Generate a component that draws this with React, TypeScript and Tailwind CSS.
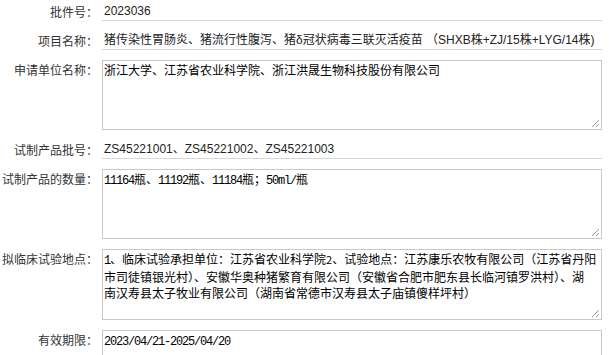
import React from "react";

const sans = "font-['Liberation_Sans','Noto_Sans_CJK_SC',sans-serif]";
const cjk = "font-['Noto_Sans_CJK_SC',sans-serif]";

function L({ children }: { children: React.ReactNode }) {
  return <span className="font-['Liberation_Mono',monospace] tracking-[-1.2px]">{children}</span>;
}

function Grip() {
  return (
    <svg className="absolute right-[1px] bottom-[1px]" width="10" height="10" viewBox="0 0 10 10">
      <line x1="9" y1="2" x2="2" y2="9" stroke="#9a9a9a" strokeWidth="1" />
      <line x1="9" y1="6" x2="6" y2="9" stroke="#9a9a9a" strokeWidth="1" />
    </svg>
  );
}

function Label({ text, top }: { text: string; top?: boolean }) {
  return (
    <div
      className={`w-[98px] shrink-0 text-right text-[12px] text-[#333] whitespace-nowrap ${cjk} ${
        top ? "pt-[2px] leading-[16px]" : "leading-[19px]"
      }`}
    >
      {text}
    </div>
  );
}

function InputRow({ label, value }: { label: string; value: React.ReactNode }) {
  return (
    <div className="flex">
      <Label text={label} />
      <div
        className={`ml-[4px] w-[500px] h-[19px] border-b border-[#d6d6d6] pl-[2px] text-[12px] leading-[18px] text-[#222] whitespace-nowrap ${sans}`}
      >
        {value}
      </div>
    </div>
  );
}

function AreaRow({ label, lines, h = "h-[70px]" }: { label: string; lines: React.ReactNode[]; h?: string }) {
  return (
    <div className="flex">
      <Label text={label} top />
      <div
        className={`relative ml-[4px] w-[500px] ${h} border border-[#c8c8c8] bg-white px-[1px] pt-[1px] text-[12px] leading-[16px] text-black ${cjk}`}
      >
        {lines.map((l, i) => (
          <div key={i} className="whitespace-nowrap">
            {l}
          </div>
        ))}
        <Grip />
      </div>
    </div>
  );
}

export default function App() {
  return (
    <div className="w-[611px] h-[355px] overflow-hidden bg-white pt-[2px]">
      <div className="flex flex-col gap-[10px]">
        <InputRow label="批件号：" value="2023036" />
        <InputRow
          label="项目名称："
          value="猪传染性胃肠炎、猪流行性腹泻、猪δ冠状病毒三联灭活疫苗 （SHXB株+ZJ/15株+LYG/14株)"
        />
        <AreaRow label="申请单位名称：" lines={["浙江大学、江苏省农业科学院、浙江洪晟生物科技股份有限公司"]} />
        <InputRow label="试制产品批号：" value="ZS45221001、ZS45221002、ZS45221003" />
        <AreaRow
          label="试制产品的数量："
          lines={[
            <>
              <L>11164</L>瓶、<L>11192</L>瓶、<L>11184</L>瓶；<L>50ml/</L>瓶
            </>,
          ]}
        />
        <AreaRow
          label="拟临床试验地点："
          h="h-[71px]"
          lines={[
            <>
              <L>1</L>、临床试验承担单位：江苏省农业科学院<span className="text-[11px]">2</span>、试验地点：江苏康乐农牧有限公司（江苏省丹阳
            </>,
            "市司徒镇银光村）、安徽华奥种猪繁育有限公司（安徽省合肥市肥东县长临河镇罗洪村）、湖",
            "南汉寿县太子牧业有限公司（湖南省常德市汉寿县太子庙镇傻样坪村）",
          ]}
        />
        <AreaRow
          label="有效期限："
          lines={[
            <>
              <L>2023/04/21-2025/04/20</L>
            </>,
          ]}
        />
      </div>
    </div>
  );
}
